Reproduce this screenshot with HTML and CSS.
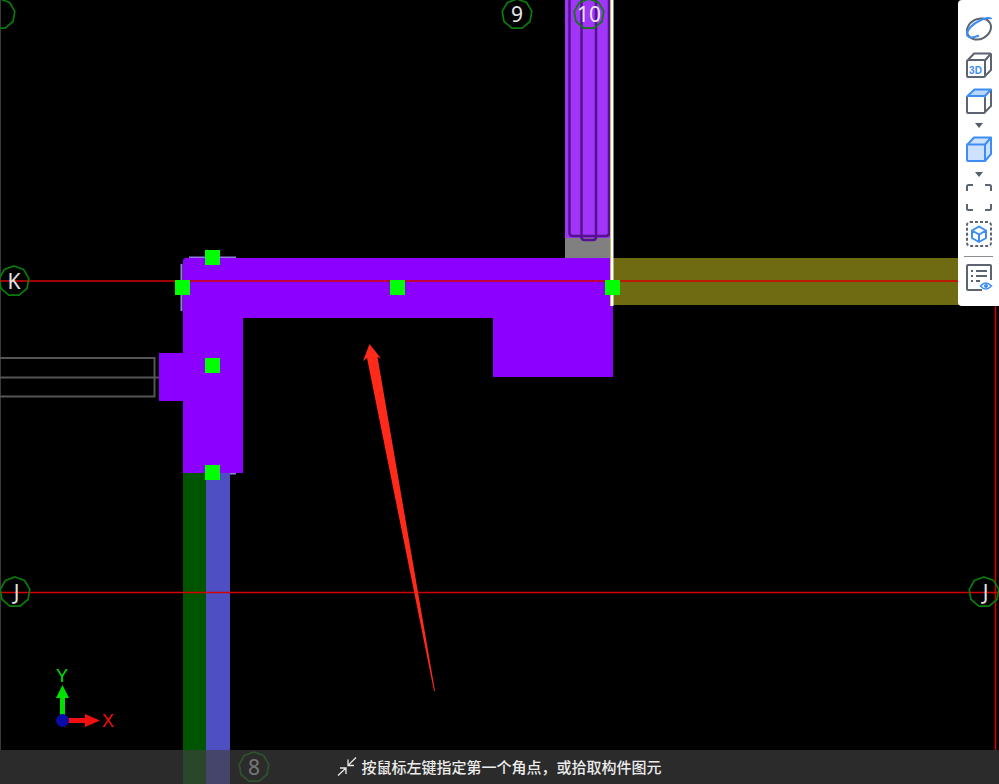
FILE: index.html
```html
<!DOCTYPE html>
<html lang="zh-CN">
<head>
  <meta charset="UTF-8"/>
  <meta name="viewport" content="width=device-width,initial-scale=1.0"/>
  <title>绘图区</title>
  <link rel="stylesheet" href="styles.css">
</head>
<body>
<div class="viewport">
  <!-- drawing canvas -->
  <svg class="drawing" width="999" height="784" viewBox="0 0 999 784">
    <defs>
      <polygon id="axisMark" class="axis-mark" points="0,-15 9.6,-11.5 14.8,-2.6 13,7.5 5.1,14.1 -5.1,14.1 -13,7.5 -14.8,-2.6 -9.6,-11.5"/>
    </defs>

    <line class="edge" x1="0.5" y1="0" x2="0.5" y2="750"/>

    <!-- beams and walls under the selection -->
    <rect class="olive" x="613" y="258" width="386" height="47"/>
    <rect class="column" x="565" y="0" width="46" height="238"/>
    <rect class="grey" x="565" y="238" width="46" height="20"/>
    <path class="rebar" d="M569.5 0V233q0 3 3 3H606q3 0 3-3V0"/>
    <path class="rebar" d="M581.5 0V237q0 3 3 3H593q3 0 3-3V0"/>
    <rect class="wall-green" x="183" y="473" width="23" height="311"/>
    <rect class="wall-blue" x="206" y="473" width="24" height="311"/>
    <path class="wire" d="M0 358H154.500V396.500H0M0 377.500H159"/>

    <!-- selected slab -->
    <path class="outline" d="M189 257.500H236M181.500 264V311M230 473.500H236"/>
    <polygon class="slab" points="185,258 613,258 613,377 493,377 493,318 243,318 243,473 183,473 183,401 159,401 159,353 183,353 183,260"/>
    <rect class="olive-edge" x="610" y="0" width="1" height="306"/>
    <rect class="white-edge" x="611" y="0" width="2.500" height="306"/>

    <!-- grid -->
    <line class="grid" x1="0" y1="281" x2="958" y2="281"/>
    <line class="grid" x1="0" y1="592.500" x2="999" y2="592.500"/>
    <line class="grid" x1="995.500" y1="306" x2="995.500" y2="750"/>

    <use href="#axisMark" x="0" y="14"/>
    <g transform="translate(517 14)"><use href="#axisMark"/><text class="axis-label" y="7.500">9</text></g>
    <g transform="translate(589 14)"><use href="#axisMark"/><text class="axis-label" y="7.500">10</text></g>
    <g transform="translate(14 281)"><use href="#axisMark"/><text class="axis-label" y="7.500">K</text></g>
    <g transform="translate(15 592)"><use href="#axisMark"/><text class="axis-label" x="1.500" y="7.500">J</text></g>
    <g transform="translate(984 592)"><use href="#axisMark"/><text class="axis-label" x="1.500" y="7.500">J</text></g>
    <g transform="translate(254 767)"><use href="#axisMark"/><text class="axis-label" y="7.500">8</text></g>

    <!-- grips -->
    <rect class="grip" x="205" y="250" width="15" height="15"/>
    <rect class="grip" x="175" y="280" width="15" height="15"/>
    <rect class="grip" x="390" y="280" width="15" height="15"/>
    <rect class="grip" x="605" y="280" width="15" height="15"/>
    <rect class="grip" x="205" y="358" width="15" height="15"/>
    <rect class="grip" x="205" y="465" width="15" height="15"/>

    <!-- annotation arrow -->
    <polygon class="callout" points="369.500,344 381,358.500 377.500,357 435,691 434,691 367,358 363,361"/>

    <!-- ucs -->
    <rect class="ucs-y" x="60" y="695" width="5" height="20"/>
    <polygon class="ucs-y" points="62.500,685 69,698 56,698"/>
    <rect class="ucs-x" x="68" y="718" width="18" height="5"/>
    <polygon class="ucs-x" points="100,720.500 85,714 85,727"/>
    <circle class="ucs-o" cx="62.500" cy="720.500" r="6.500"/>
    <text class="ucs-text ucs-y" x="62" y="682">Y</text>
    <text class="ucs-text ucs-x" x="108" y="727">X</text>
  </svg>

  <!-- view toolbar -->
  <div class="toolbar">
    <svg class="tool" width="28" height="30" viewBox="0 0 28 30">
      <ellipse class="ic-grey" cx="14" cy="15" rx="12.500" ry="10" transform="rotate(-28 14 15)"/>
      <path class="ic-blue" d="M2.500 22C0 17 8 9.500 15 6.500c5-2.500 10.500-3.500 11.500-1.500"/>
      <path class="ic-blue" d="M2.500 22c2 2.500 7 1.500 11.500-.500"/>
    </svg>
    <svg class="tool" width="28" height="28" viewBox="0 0 28 28">
      <path class="ic-grey" d="M2 10V25q0 1 1 1H19q1 0 1-1V10q0-1-1-1H3q-1 0-1 1ZM2.500 9.500 9 2.500H25q1 0 1 1V19l-6 6M20 9.500 25.500 3"/>
      <text class="ic-3d" x="10.500" y="23">3D</text>
    </svg>
    <svg class="tool" width="28" height="28" viewBox="0 0 28 28">
      <path class="ic-face" d="M2.500 10 9 3H26L20 10Z"/>
      <path class="ic-grey" d="M2 11V26q0 1 1 1H19q1 0 1-1V11M20 26l6-6V4"/>
      <path class="ic-blue" d="M2 11q0-1 1-1H20L26 3.500H9.500L2.500 10M20 10V12"/>
    </svg>
    <div class="caret"></div>
    <svg class="tool" width="28" height="28" viewBox="0 0 28 28">
      <path class="ic-fill" d="M2 10q0-1 1-1L9 2.500H26V19l-6 7H3q-1 0-1-1Z"/>
      <path class="ic-blue" d="M2.500 9.500H20V26M20 9.500 26 2.500"/>
    </svg>
    <div class="caret"></div>
    <svg class="tool" width="28" height="28" viewBox="0 0 28 28">
      <path class="ic-grey" d="M2 7V2.500Q2 1 3.500 1H8M20 1h4.500Q26 1 26 2.500V7M26 20v4.500Q26 26 24.500 26H20M8 26H3.500Q2 26 2 24.500V20"/>
    </svg>
    <svg class="tool" width="28" height="28" viewBox="0 0 28 28">
      <rect class="ic-dash" x="2" y="3" width="24" height="24" rx="3"/>
      <path class="ic-blue" d="M14 7.500 21 11.500V19L14 23 7 19V11.500ZM7 11.500 14 15.500 21 11.500M14 15.500V23"/>
    </svg>
    <div class="sep"></div>
    <svg class="tool" width="28" height="28" viewBox="0 0 28 28">
      <path class="ic-grey" d="M17 26H3q-1 0-1-1V2q0-1 1-1H25q1 0 1 1V16"/>
      <path class="ic-grey" d="M6 7H8M11 7H22M6 12H8M11 12H22M6 17H8M11 17H15"/>
      <path class="ic-eye" d="M15.500 22q5-6 11 0q-6 6-11 0Z"/>
      <circle class="ic-pupil" cx="21" cy="22" r="2"/>
    </svg>
  </div>

  <!-- command prompt -->
  <div class="status-bar">
    <svg class="status-icon" width="20" height="20" viewBox="0 0 20 20">
      <path d="M1 18.500 9 11M3 11H9V17M19 .500 11 8.500M11 2.500V8.500H17"/>
    </svg>
    <span class="status-text">按鼠标左键指定第一个角点，或拾取构件图元</span>
  </div>
</div>
</body>
</html>
```
FILE: styles.css
```css
/* page */
*{box-sizing:border-box}
html,body{margin:0;padding:0;background:#000}
.viewport{position:relative;width:999px;height:784px;overflow:hidden;background:#000}
.drawing{position:absolute;top:0;left:0;display:block}

/* drawing */
.edge{stroke:#3a3a3a;stroke-width:1}
.olive{fill:#6f6b12}
.olive-edge{fill:#c8c060}
.column{fill:#a136fa}
.grey{fill:#808080}
.rebar{fill:none;stroke:#55128f;stroke-width:2.500}
.wall-green{fill:#005500}
.wall-blue{fill:#4f4fc4}
.wire{fill:none;stroke:#555;stroke-width:2}
.outline{fill:none;stroke:#8f80e0;stroke-width:2}
.slab{fill:#8c00ff}
.white-edge{fill:#fff}
.grid{stroke:#d40000;stroke-width:1.500}
.axis-mark{fill:none;stroke:#0b7a0b;stroke-width:1.700}
.axis-label{font:21px "Noto Sans","Liberation Sans",sans-serif;fill:#e4e4e4;text-anchor:middle}
.grip{fill:#00ff00}
.callout{fill:#ff2a1a}
.ucs-y{fill:#00e000}
.ucs-x{fill:#f01010}
.ucs-o{fill:#0a0aa8}
.ucs-text{font:18px "Liberation Sans",sans-serif;text-anchor:middle}

/* toolbar */
.toolbar{position:absolute;top:0;right:0;width:41px;height:306px;padding-top:14px;background:#fff;border-radius:4px 0 0 4px;display:flex;flex-direction:column;align-items:center;gap:7px}
.tool{display:block;flex:none}
.caret{flex:none;width:0;height:0;margin-top:2px;border-left:4.500px solid transparent;border-right:4.500px solid transparent;border-top:5px solid #555e6b}
.sep{flex:none;width:29px;height:1px;margin-top:2px;background:#8a8f96}
.ic-grey{fill:none;stroke:#5b6470;stroke-width:2;stroke-linejoin:round}
.ic-blue{fill:none;stroke:#3d8df5;stroke-width:2;stroke-linejoin:round}
.ic-face{fill:#b9d6fb}
.ic-fill{fill:#cfe2fd;stroke:#3d8df5;stroke-width:2;stroke-linejoin:round}
.ic-dash{fill:none;stroke:#5b6470;stroke-width:2;stroke-dasharray:3 2}
.ic-eye{fill:#fff;stroke:#3d8df5;stroke-width:1.500}
.ic-pupil{fill:#3d8df5}
.ic-3d{font:bold 10px "Liberation Sans",sans-serif;fill:#3d8df5;text-anchor:middle}

/* status bar */
.status-bar{position:absolute;left:0;right:0;bottom:0;height:34px;background:rgba(64,64,64,.67);display:flex;align-items:center;justify-content:center;gap:4px}
.status-icon{flex:none;fill:none;stroke:#e8e8e8;stroke-width:1.300}
.status-text{font-family:"Noto Sans CJK SC",sans-serif;font-size:15px;font-weight:500;color:#ececec;line-height:20px}
```
